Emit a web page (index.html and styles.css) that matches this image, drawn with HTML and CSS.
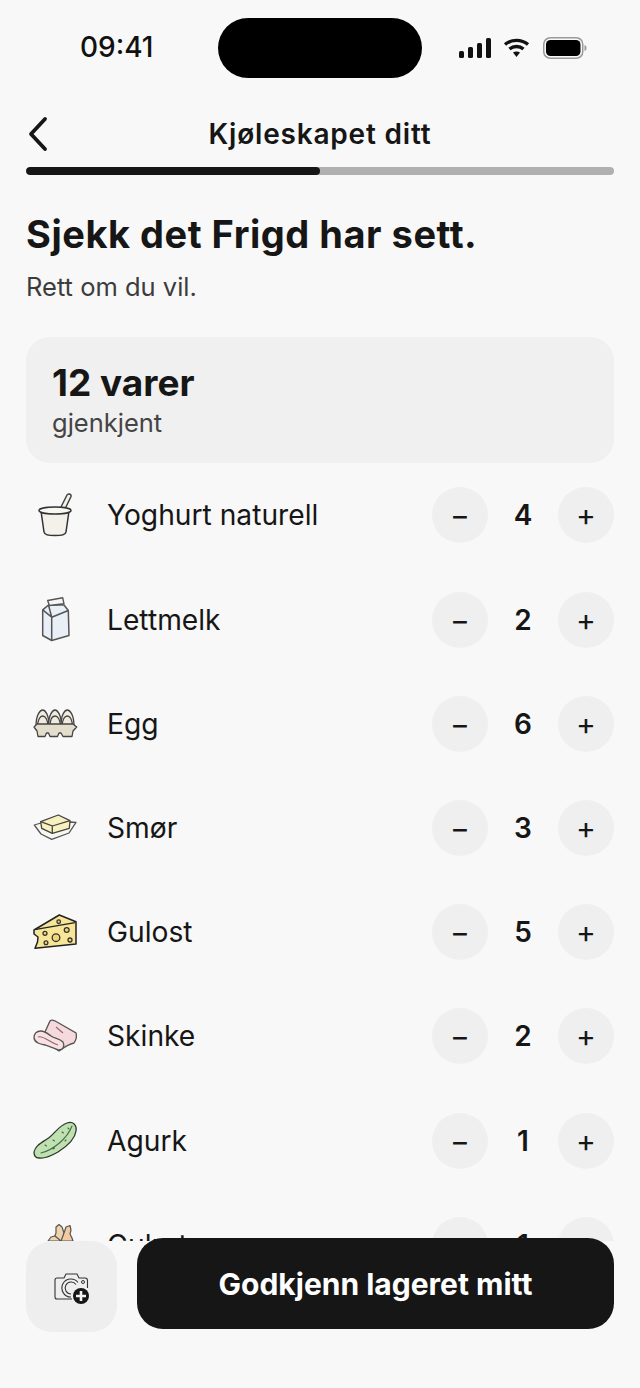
FILE: index.html
```html
<!DOCTYPE html>
<html lang="no">
<head>
<meta charset="utf-8">
<title>Kjøleskapet ditt</title>
<link rel="stylesheet" href="styles.css">
</head>
<body>
<div class="screen">
  <div class="status">
    <span class="time">09:41</span>
    <div class="island"></div>
    <div class="status-icons">
      <svg width="32" height="20" viewBox="0 0 32 20"><g fill="#111"><rect x="0" y="13" width="5" height="7" rx="1.5"/><rect x="9" y="9" width="5" height="11" rx="1.5"/><rect x="18" y="5" width="5" height="15" rx="1.5"/><rect x="27" y="0" width="5" height="20" rx="1.5"/></g></svg>
      <svg width="27" height="20" viewBox="0 0 26 20"><g fill="none" stroke="#111" stroke-width="3.4"><path d="M1.5 6.5C8 1 18 1 24.500 6.500"/><path d="M6 11C10 7.600 16 7.600 20 11"/></g><path d="M9.500 14.500C11.500 13 14.500 13 16.500 14.500L13 19Z" fill="#111"/></svg>
      <svg class="battery" width="44" height="22" viewBox="0 0 44 22"><rect x="0.750" y="0.750" width="39" height="20.500" rx="6.500" fill="none" stroke="#999" stroke-width="1.500"/><rect x="3" y="3" width="34.500" height="16" rx="4.500" fill="#000"/><path d="M41.500 8C43 8.500 43.500 9.500 43.500 11S43 13.500 41.500 14Z" fill="#999"/></svg>
    </div>
  </div>

  <header class="nav">
    <svg class="back" width="22" height="36" viewBox="0 0 22 36"><path d="M18 3L4 18L18 33" transform="translate(1 0)" fill="none" stroke="#161616" stroke-width="3.800" stroke-linecap="round" stroke-linejoin="round"/></svg>
    <h2 class="nav-title">Kjøleskapet ditt</h2>
  </header>
  <div class="progress"><div class="progress-fill"></div></div>

  <main class="content">
    <h1 class="title">Sjekk det Frigd har sett.</h1>
    <p class="subtitle">Rett om du vil.</p>

    <section class="summary">
      <div class="summary-count">12 varer</div>
      <div class="summary-label">gjenkjent</div>
    </section>

    <ul class="list">
      <li class="row">
        <svg class="food" viewBox="0 0 48 48"><path d="M29 18L36 4C37 2 40.500 3 40 5.500L34 18" fill="#f3f1ea" stroke="#444" stroke-width="1.500"/><path d="M10 20L13 41C13.500 44 17 44.500 24 44.500S34.500 44 35 41L38 20Z" fill="#f3f1ea" stroke="#333" stroke-width="1.500"/><ellipse cx="24" cy="19.500" rx="16" ry="3.500" fill="#f8f7f2" stroke="#333" stroke-width="1.500"/></svg>
        <span class="name">Yoghurt naturell</span>
        <div class="stepper"><button class="step">−</button><span class="qty">4</span><button class="step">+</button></div>
      </li>
      <li class="row">
        <svg class="food" viewBox="0 0 48 48"><path d="M11.700 13.800L17.500 9H33L37.300 14.500L38 39.500L20.700 44.500L11.700 39.500Z" fill="#e9eff6" stroke="#555" stroke-width="1.500" stroke-linejoin="round"/><path d="M11.700 13.800L20.700 21.200V44.500M20.700 21.200L37.300 14.500M17.500 9L20.700 21.200" fill="none" stroke="#555" stroke-width="1.500"/><path d="M16.700 4.500L31.700 1.800L33 7.800L18.300 9.500Z" fill="#f6f6f6" stroke="#555" stroke-width="1.400" stroke-linejoin="round"/></svg>
        <span class="name">Lettmelk</span>
        <div class="stepper"><button class="step">−</button><span class="qty">2</span><button class="step">+</button></div>
      </li>
      <li class="row">
        <svg class="food" viewBox="0 0 48 48"><g fill="#f0ebdf" stroke="#444" stroke-width="1.300"><path d="M5 26C5 15 9 10 11.700 10S18 15 18 26Z"/><path d="M17.500 26C17.500 15 21.500 10 24 10S30.500 15 30.500 26Z"/><path d="M30 26C30 15 33.500 10 36.300 10S43 15 43 26Z"/><path d="M6.500 27C6.500 19 9.500 16 11.700 16S17 19 17 27Z"/><path d="M19 27C19 19 21.500 16 24 16S29.500 19 29.500 27Z"/><path d="M31 27C31 19 34 16 36.300 16S41.500 19 41.500 27Z"/></g><path d="M3 27L6 24H42L45.700 27L42 31L41 36.500H32L30 33H28L26.500 36.500H19L17.500 33H15.500L14 36.500H7L6 31Z" fill="#e3ddcb" stroke="#444" stroke-width="1.300" stroke-linejoin="round"/></svg>
        <span class="name">Egg</span>
        <div class="stepper"><button class="step">−</button><span class="qty">6</span><button class="step">+</button></div>
      </li>
      <li class="row">
        <svg class="food" viewBox="0 0 48 48"><path d="M3.300 21L10 19L39 18L45 18.300L38 29L20.700 35.300L10 30Z" fill="#f8f7f0" stroke="#555" stroke-width="1.300" stroke-linejoin="round"/><path d="M9.700 17.700L27.300 11L39 16.700L38.300 24.300L21.300 29.300L10.700 24.300Z" fill="#f7f0bf" stroke="#444" stroke-width="1.300" stroke-linejoin="round"/><path d="M9.700 17.700L21.300 22V29.300M21.300 22L39 16.700" fill="none" stroke="#444" stroke-width="1.300"/></svg>
        <span class="name">Smør</span>
        <div class="stepper"><button class="step">−</button><span class="qty">3</span><button class="step">+</button></div>
      </li>
      <li class="row">
        <svg class="food" viewBox="0 0 48 48"><path d="M3 22L28.300 7L45 13.700L45 36L4 40.300L6.500 34L7 29L3 26Z" fill="#f7e698" stroke="#222" stroke-width="1.500" stroke-linejoin="round"/><path d="M5 21.300L44 14.700" fill="none" stroke="#222" stroke-width="1.200"/><g fill="#efd675" stroke="#333" stroke-width="1.300"><circle cx="25" cy="29.700" r="3.800"/><circle cx="14" cy="25.300" r="2"/><circle cx="35.700" cy="22" r="2.400"/><circle cx="39" cy="32" r="2"/><circle cx="15" cy="34.700" r="1.900"/><circle cx="27.700" cy="13.700" r="1.800"/></g></svg>
        <span class="name">Gulost</span>
        <div class="stepper"><button class="step">−</button><span class="qty">5</span><button class="step">+</button></div>
      </li>
      <li class="row">
        <svg class="food" viewBox="0 0 48 48"><path d="M14 20L19 9C21 7 23 8 26 10L45 21C46 24 45 28 43 31C38 32 32 36 28 39L14 30Z" fill="#f5d9dc" stroke="#555" stroke-width="1.300"/><path d="M10 19C5 19 3 22 3 26C4 31 9 32 14 33L28 38C32 38 34 34 32 30C28 26 24 27 20 24C17 22 14 19 10 19Z" fill="#f9e0e3" stroke="#555" stroke-width="1.300"/><path d="M7 25C12 23 18 30 27 33M25 15L32 21" fill="none" stroke="#8c6a6e" stroke-width="1.100"/></svg>
        <span class="name">Skinke</span>
        <div class="stepper"><button class="step">−</button><span class="qty">2</span><button class="step">+</button></div>
      </li>
      <li class="row">
        <svg class="food" viewBox="0 0 48 48"><path d="M3 35C4 29 10 26 16 22C23 18 27 9 36 6C42 4 46 8 45 14C44 22 35 30 27 35C20 39 14 42 8 41C4 41 3 38 3 35Z" fill="#bfe0b0" stroke="#2f3a2c" stroke-width="1.300"/><path d="M10 36C22 33 36 22 41 9M14 28L15.500 29M22 23L23.500 24M31 15L32.500 16M22 32L23.500 31M34 24L35 23M38 12L37 11" fill="none" stroke="#4a6a45" stroke-width="1.100" stroke-linecap="round"/></svg>
        <span class="name">Agurk</span>
        <div class="stepper"><button class="step">−</button><span class="qty">1</span><button class="step">+</button></div>
      </li>
      <li class="row">
        <svg class="food" viewBox="0 0 48 48"><g fill="#efd3ac" stroke="#555" stroke-width="1.200" stroke-linejoin="round"><path d="M30 20L23 17L25 12L25 6L28 3.500L31 6L33 12L32 18Z"/><path d="M30 20L33 12L35 6L39 4.500L40 9L39 13L41 17L42 20Z" fill="#f3c9a4"/><path d="M30 20L24 15L20 16L17 20Z"/></g></svg>
        <span class="name">Gulrot</span>
        <div class="stepper"><button class="step">−</button><span class="qty">1</span><button class="step">+</button></div>
      </li>
    </ul>
  </main>

  <footer class="footer">
    <button class="camera">
      <svg width="38" height="34" viewBox="0 0 38 34"><path d="M3 7H10L12 3H23L25 7H31C32.500 7 33.500 8 33.500 9.500V17M18 28H3C1.800 28 1 27 1 26V9C1 8 1.800 7 3 7" fill="none" stroke="#333" stroke-width="1.100"/><path d="M24 11.500A9 9 0 1 0 17 26M22 13.500A6 6 0 1 0 17 23" fill="none" stroke="#333" stroke-width="1.100"/><circle cx="29" cy="11" r="1.500" fill="none" stroke="#333" stroke-width="1"/><circle cx="27" cy="25" r="8" fill="#161616"/><path d="M27 20V30M22 25H32" stroke="#f2f2f2" stroke-width="2.600"/></svg>
    </button>
    <button class="cta">Godkjenn lageret mitt</button>
  </footer>
</div>
</body>
</html>
```

FILE: styles.css
```css
* { box-sizing: border-box; }
html, body { margin: 0; padding: 0; }
body {
  background: #f8f8f8;
  color: #161616;
  font-family: "Inter", "Liberation Sans", sans-serif;
}
.screen {
  position: relative;
  width: 640px;
  height: 1388px;
  overflow: hidden;
  background: #f8f8f8;
}
.status {
  height: 96px;
  display: flex;
  align-items: flex-start;
  padding: 18px 53px 0 80px;
}
.time {
  width: 138px;
  margin-top: 12px;
  font-size: 28px;
  line-height: 34px;
  font-weight: 500;
  color: #111;
}
.island {
  width: 204px;
  height: 60px;
  border-radius: 30px;
  background: #000;
}
.status-icons {
  margin-left: 37px;
  margin-top: 19px;
  display: flex;
  align-items: center;
  gap: 12px;
}
.battery { margin-left: 1px; }
.nav {
  position: relative;
  height: 72px;
  padding: 0 26px;
  display: flex;
  align-items: center;
  justify-content: center;
}
.back { position: absolute; left: 26px; top: 20px; }
.nav-title {
  margin: 0;
  padding-top: 4px;
  font-size: 28px;
  line-height: 34px;
  font-weight: 600;
  letter-spacing: .8px;
}
.progress {
  margin: -1px 26px 0;
  height: 8px;
  border-radius: 4px;
  background: #b0b0b0;
  overflow: hidden;
}
.progress-fill {
  width: 50%;
  height: 100%;
  border-radius: 4px;
  background: #161616;
}
.content { padding: 0 26px; }
.title {
  margin: 35px 0 0;
  font-size: 38px;
  line-height: 48px;
  font-weight: 700;
  letter-spacing: .52px;
}
.subtitle {
  margin: 13px 0 0;
  font-size: 25.500px;
  line-height: 32px;
  color: #3c3c3c;
}
.summary {
  margin-top: 34px;
  height: 126px;
  padding: 23px 26px 0;
  border-radius: 24px;
  background: #f0f0f0;
}
.summary-count {
  font-size: 37px;
  line-height: 46px;
  font-weight: 700;
}
.summary-label {
  padding-top: 1px;
  font-size: 25.500px;
  line-height: 32px;
  color: #444;
}
.list { margin: 0; padding: .4px 0 0; list-style: none; }
.row {
  height: 104.200px;
  display: flex;
  align-items: center;
}
.food { width: 48px; height: 48px; margin-left: 5px; flex: none; }
.name {
  flex: 1;
  margin-left: 28px;
  font-size: 28.200px;
  line-height: 36px;
}
.stepper {
  display: flex;
  align-items: center;
}
.step {
  width: 56px;
  height: 56px;
  padding: 0;
  border: 0;
  border-radius: 50%;
  background: #efefef;
  color: #161616;
  font-family: "Inter", sans-serif;
  font-size: 30px;
  line-height: 1;
}
.qty {
  width: 70px;
  text-align: center;
  font-size: 28px;
  font-weight: 600;
}
.footer {
  position: absolute;
  left: 0;
  right: 0;
  top: 1241px;
  bottom: 0;
  padding: 0 26px;
  background: #f8f8f8;
  display: flex;
  align-items: flex-start;
  gap: 20px;
}
.camera {
  width: 91px;
  height: 91px;
  padding: 2px 0 0 2px;
  border: 0;
  border-radius: 26px;
  background: #eeeeee;
  display: flex;
  align-items: center;
  justify-content: center;
}
.cta {
  flex: 1;
  height: 91px;
  margin-top: -3px;
  padding: 0;
  border: 0;
  border-radius: 26px;
  background: #161616;
  color: #fff;
  font-family: "Inter", sans-serif;
  font-size: 30px;
  font-weight: 700;
}
```
